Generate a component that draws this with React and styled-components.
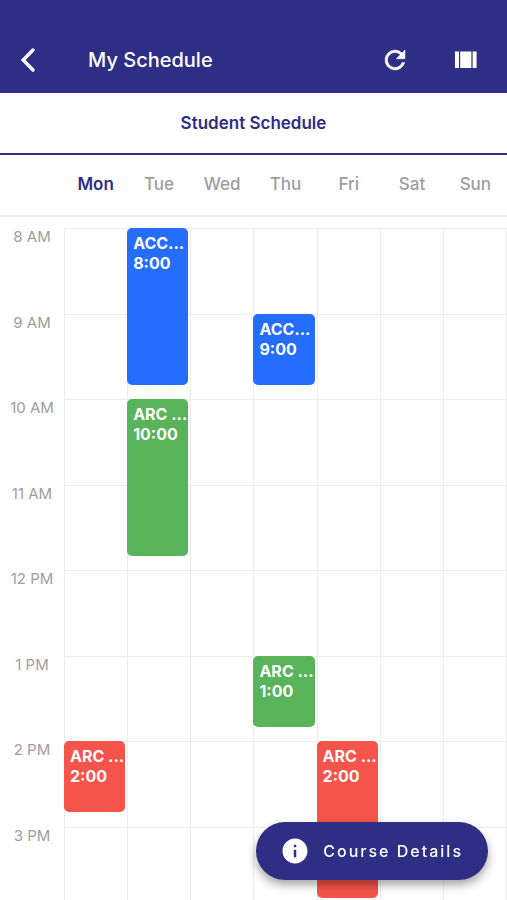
import React, { useState } from 'react';
import styled, { createGlobalStyle, ThemeProvider } from 'styled-components';
import { MdInfo } from 'react-icons/md';

const theme = {
  colors: {
    primary: '#2e2e85',
    white: '#ffffff',
    muted: '#9e9e9e',
    line: '#ececec',
    blue: '#246dff',
    green: '#58b35b',
    red: '#f5544a',
  },
};

const GlobalStyle = createGlobalStyle`
  *,
  *::before,
  *::after {
    box-sizing: border-box;
  }

  body {
    margin: 0;
    font-family: Inter, 'Liberation Sans', sans-serif;
    background-color: #ffffff;
  }

  button {
    font-family: inherit;
    border: none;
    padding: 0;
    background: none;
    cursor: pointer;
  }
`;

const Screen = styled.div`
  display: flex;
  flex-direction: column;
  height: 100vh;
  overflow: hidden;
`;

const TopBar = styled.header`
  flex: none;
  display: flex;
  align-items: center;
  padding: 26px 7px 0 0;
  background-color: ${({ theme }) => theme.colors.primary};
  color: ${({ theme }) => theme.colors.white};
`;

const Title = styled.h1`
  flex: 1;
  margin: 0;
  padding-left: 32px;
  font-size: 20px;
  font-weight: 500;
  line-height: 28px;
`;

const IconButton = styled.button`
  display: flex;
  align-items: center;
  justify-content: center;
  width: ${({ $narrow }) => ($narrow ? 56 : 70)}px;
  height: 67px;
  color: inherit;
`;

const TabBar = styled.nav`
  flex: none;
  display: flex;
  border-bottom: 2px solid ${({ theme }) => theme.colors.primary};
`;

const Tab = styled.button`
  flex: 1;
  height: 60px;
  font-size: 17px;
  font-weight: 600;
  color: ${({ theme }) => theme.colors.primary};
`;

const DayRow = styled.div`
  flex: none;
  display: grid;
  grid-template-columns: 64px repeat(7, 1fr);
  padding: 17px 0 19px;
  border-bottom: 2px solid ${({ theme }) => theme.colors.line};
`;

const Day = styled.span`
  font-size: 17px;
  font-weight: ${({ $active }) => ($active ? 600 : 500)};
  line-height: 24px;
  text-align: center;
  color: ${({ theme, $active }) => ($active ? theme.colors.primary : theme.colors.muted)};

  &:first-child {
    grid-column: 2;
  }
`;

const Scroller = styled.main`
  flex: 1;
  min-height: 0;
  padding-top: 11px;
  overflow-y: auto;
  scrollbar-width: none;
`;

/* one grid row is ten minutes */
const Calendar = styled.div`
  display: grid;
  grid-template-columns: 64px repeat(7, 1fr);
  grid-template-rows: repeat(48, 1fr);
  height: 684px;
  border-right: 1px solid ${({ theme }) => theme.colors.line};
`;

const Hour = styled.span`
  grid-column: 1;
  grid-row: ${({ $row }) => $row} / span 6;
  font-size: 15px;
  line-height: 18px;
  text-align: center;
  color: ${({ theme }) => theme.colors.muted};
`;

const Cell = styled.div`
  grid-column: ${({ $day }) => $day + 2};
  grid-row: ${({ $row }) => $row} / span 6;
  border-top: 1px solid ${({ theme }) => theme.colors.line};
  border-left: 1px solid ${({ theme }) => theme.colors.line};
`;

const Event = styled.button`
  grid-column: ${({ $day }) => $day + 2};
  grid-row: ${({ $row }) => $row} / span ${({ $length }) => $length};
  display: flex;
  flex-direction: column;
  align-items: flex-start;
  min-width: 0;
  margin-right: 2px;
  padding: 5px 0 0 6px;
  border-radius: 5px;
  overflow: hidden;
  background-color: ${({ theme, $color }) => theme.colors[$color]};
  color: ${({ theme }) => theme.colors.white};
  font-size: 16px;
  font-weight: 700;
  line-height: 20px;
  white-space: nowrap;
`;

const DetailsButton = styled.button`
  position: fixed;
  right: 19px;
  bottom: 20px;
  display: flex;
  align-items: center;
  gap: 13px;
  height: 58px;
  padding: 0 25px 0 24px;
  border-radius: 29px;
  background-color: ${({ theme }) => theme.colors.primary};
  color: ${({ theme }) => theme.colors.white};
  box-shadow: 0 5px 10px rgba(0, 0, 0, 0.35);
  font-size: 16px;
  font-weight: 500;
  letter-spacing: 2px;
`;

const days = ['Mon', 'Tue', 'Wed', 'Thu', 'Fri', 'Sat', 'Sun'];

const hours = ['8 AM', '9 AM', '10 AM', '11 AM', '12 PM', '1 PM', '2 PM', '3 PM'];

const events = [
  { name: 'ACC...', time: '8:00', day: 1, start: 8, length: 11, color: 'blue' },
  { name: 'ACC...', time: '9:00', day: 3, start: 9, length: 5, color: 'blue' },
  { name: 'ARC ...', time: '10:00', day: 1, start: 10, length: 11, color: 'green' },
  { name: 'ARC ...', time: '1:00', day: 3, start: 13, length: 5, color: 'green' },
  { name: 'ARC ...', time: '2:00', day: 0, start: 14, length: 5, color: 'red' },
  { name: 'ARC ...', time: '2:00', day: 4, start: 14, length: 11, color: 'red' },
];

const BackIcon = () => (
  <svg width="16" height="26" viewBox="0 0 16 26" fill="none" aria-hidden="true">
    <path
      d="M13 3 3.2 13 13 23"
      stroke="currentColor"
      strokeWidth="3.4"
      strokeLinecap="round"
    />
  </svg>
);

const RefreshIcon = () => (
  <svg width="30" height="30" viewBox="0 0 24 24" aria-hidden="true">
    <path
      d="M17.65 6.35A7.96 7.96 0 0 0 12 4a8 8 0 1 0 7.73 10h-2.08A6 6 0 1 1 12 6c1.66 0 3.14.69 4.22 1.78L13 11h7V4l-2.35 2.35z"
      fill="currentColor"
      stroke="currentColor"
      strokeWidth="0.4"
    />
  </svg>
);

const ColumnsIcon = () => (
  <svg width="30" height="30" viewBox="0 0 30 30" fill="currentColor" aria-hidden="true">
    <rect x="5" y="6.5" width="4" height="16.5" />
    <rect x="10.2" y="6.5" width="11.2" height="16.5" />
    <rect x="22.6" y="6.5" width="4" height="16.5" />
  </svg>
);

const App = () => {
  const [activeDay] = useState(0);

  return (
    <ThemeProvider theme={theme}>
      <GlobalStyle />
      <Screen>
        <TopBar>
          <IconButton $narrow aria-label="Back">
            <BackIcon />
          </IconButton>
          <Title>My Schedule</Title>
          <IconButton aria-label="Refresh">
            <RefreshIcon />
          </IconButton>
          <IconButton aria-label="Change view">
            <ColumnsIcon />
          </IconButton>
        </TopBar>
        <TabBar>
          <Tab>Student Schedule</Tab>
        </TabBar>
        <DayRow>
          {days.map((day, index) => (
            <Day key={day} $active={index === activeDay}>
              {day}
            </Day>
          ))}
        </DayRow>
        <Scroller>
          <Calendar>
            {hours.map((hour, index) => (
              <React.Fragment key={hour}>
                <Hour $row={index * 6 + 1}>{hour}</Hour>
                {days.map((day, dayIndex) => (
                  <Cell key={day} $day={dayIndex} $row={index * 6 + 1} />
                ))}
              </React.Fragment>
            ))}
            {events.map(({ name, time, day, start, length, color }) => (
              <Event
                key={`${day}-${start}`}
                $day={day}
                $row={(start - 8) * 6 + 1}
                $length={length}
                $color={color}
              >
                <span>{name}</span>
                <span>{time}</span>
              </Event>
            ))}
          </Calendar>
        </Scroller>
        <DetailsButton>
          <MdInfo size={30} />
          Course Details
        </DetailsButton>
      </Screen>
    </ThemeProvider>
  );
};

export default App;
